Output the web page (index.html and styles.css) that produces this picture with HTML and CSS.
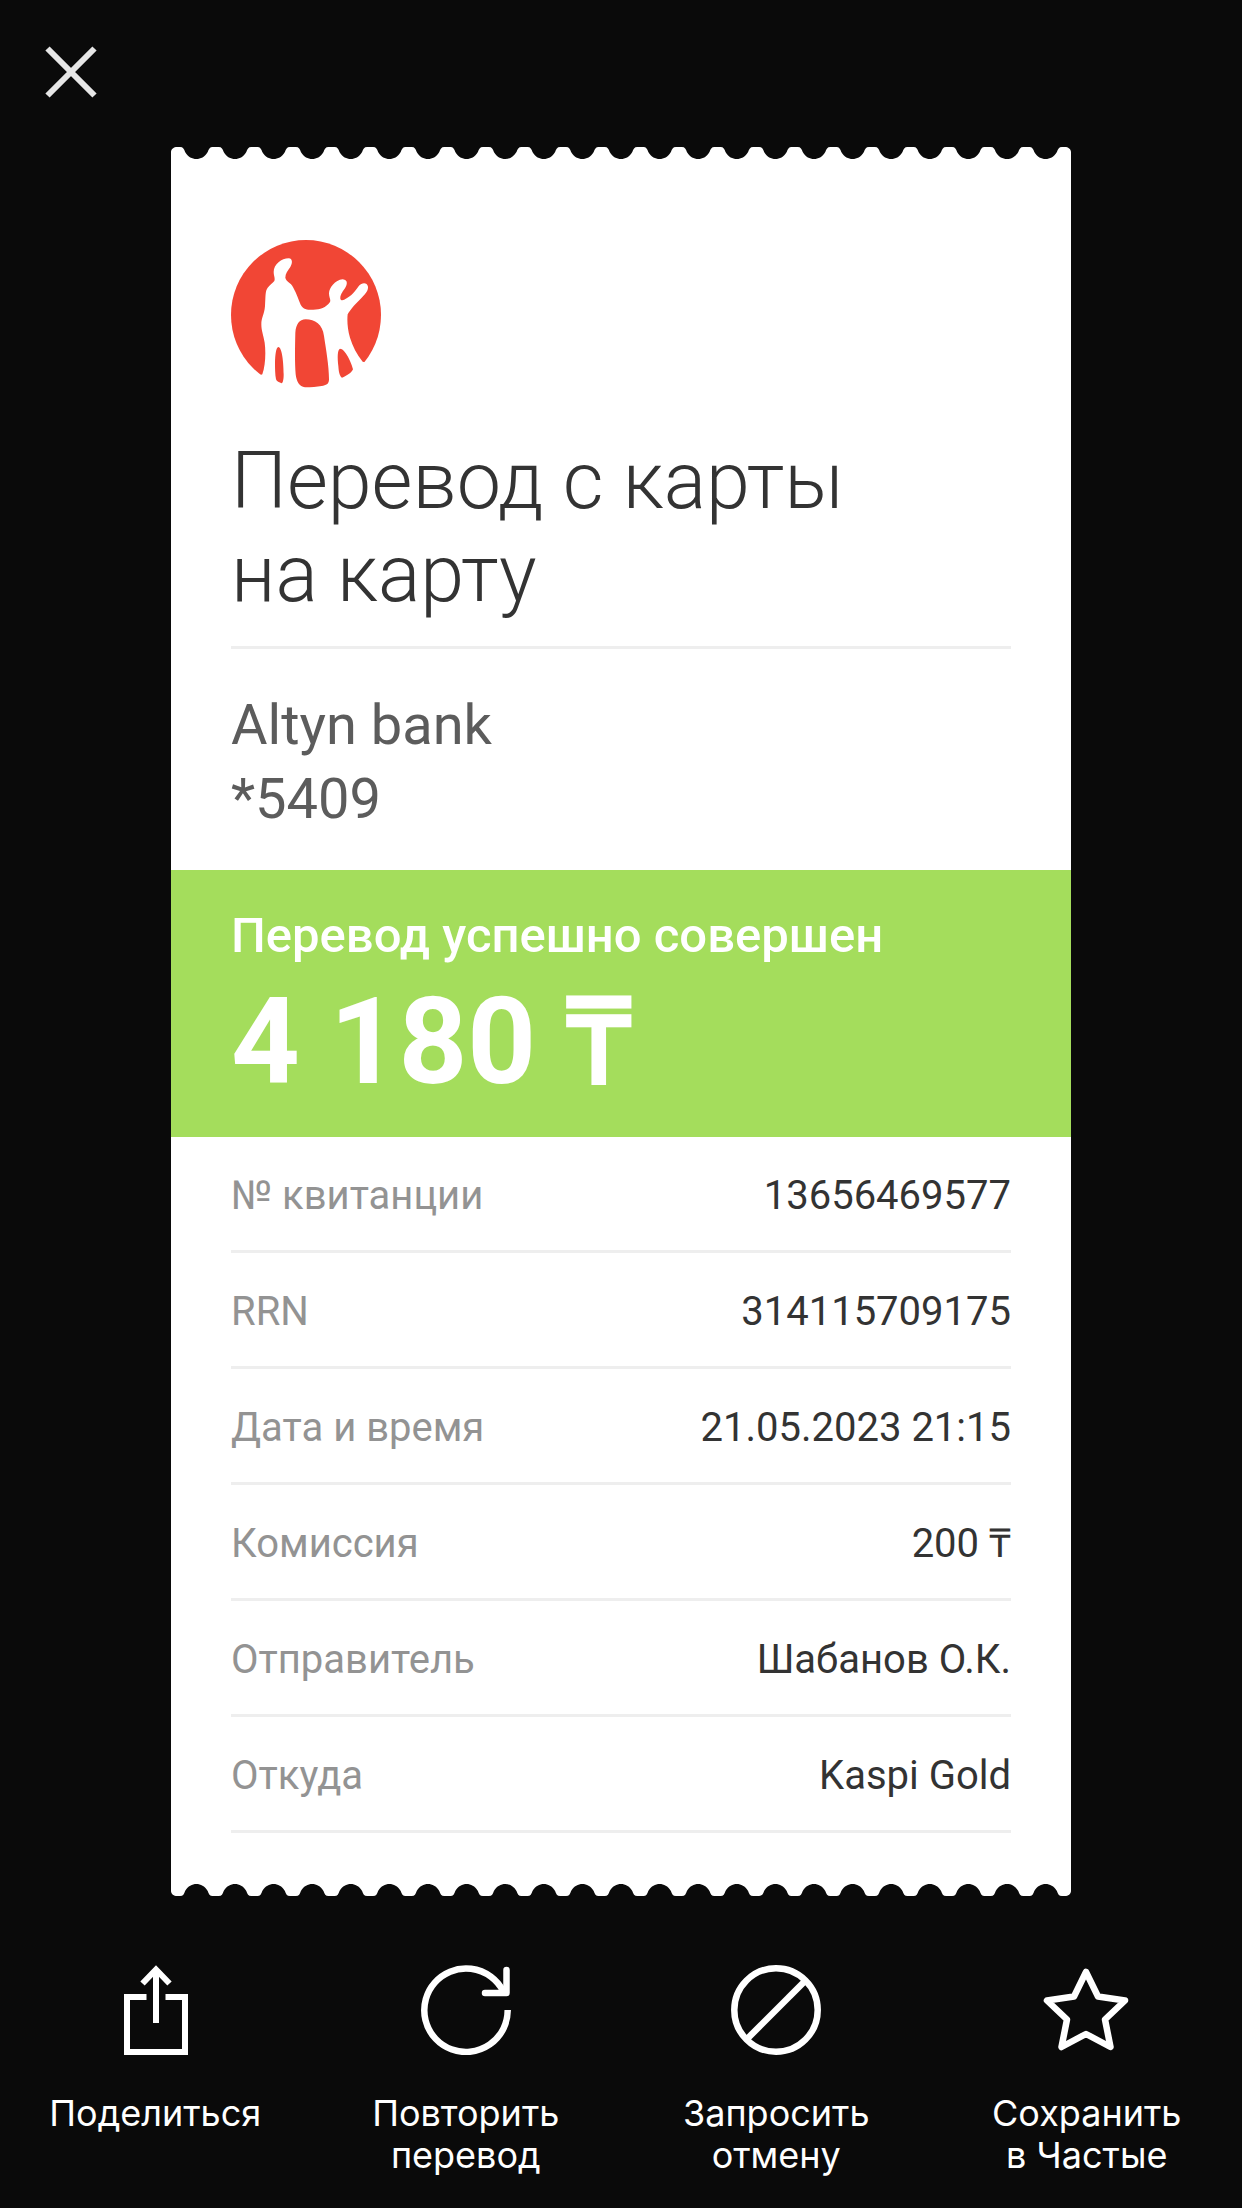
FILE: index.html
```html
<!DOCTYPE html>
<html lang="ru">
<head>
    <meta charset="UTF-8">
    <meta name="viewport" content="width=device-width, initial-scale=1.0">
    <title>Квитанция</title>
    <link rel="stylesheet" href="styles.css">
</head>
<body>
    <header>
        <button class="close-button" aria-label="Закрыть">
            <svg viewBox="0 0 52 52" width="52" height="52">
                <path d="M2.500 2.500L49.500 49.500M49.500 2.500L2.500 49.500"/>
            </svg>
        </button>
    </header>

    <main class="receipt">
        <svg class="edge" viewBox="0 0 900 12" preserveAspectRatio="none" aria-hidden="true">
            <path id="scallops" d="M0 12V5C0 2 3 0 6 0h.1
                h3c3 0 4 2 5 5c3 5 7 7 11.300 7s8.300-2 11.300-7c1-3 2-5 5-5h3
                h3c3 0 4 2 5 5c3 5 7 7 11.300 7s8.300-2 11.300-7c1-3 2-5 5-5h3
                h3c3 0 4 2 5 5c3 5 7 7 11.300 7s8.300-2 11.300-7c1-3 2-5 5-5h3
                h3c3 0 4 2 5 5c3 5 7 7 11.300 7s8.300-2 11.300-7c1-3 2-5 5-5h3
                h3c3 0 4 2 5 5c3 5 7 7 11.300 7s8.300-2 11.300-7c1-3 2-5 5-5h3
                h3c3 0 4 2 5 5c3 5 7 7 11.300 7s8.300-2 11.300-7c1-3 2-5 5-5h3
                h3c3 0 4 2 5 5c3 5 7 7 11.300 7s8.300-2 11.300-7c1-3 2-5 5-5h3
                h3c3 0 4 2 5 5c3 5 7 7 11.300 7s8.300-2 11.300-7c1-3 2-5 5-5h3
                h3c3 0 4 2 5 5c3 5 7 7 11.300 7s8.300-2 11.300-7c1-3 2-5 5-5h3
                h3c3 0 4 2 5 5c3 5 7 7 11.300 7s8.300-2 11.300-7c1-3 2-5 5-5h3
                h3c3 0 4 2 5 5c3 5 7 7 11.300 7s8.300-2 11.300-7c1-3 2-5 5-5h3
                h3c3 0 4 2 5 5c3 5 7 7 11.300 7s8.300-2 11.300-7c1-3 2-5 5-5h3
                h3c3 0 4 2 5 5c3 5 7 7 11.300 7s8.300-2 11.300-7c1-3 2-5 5-5h3
                h3c3 0 4 2 5 5c3 5 7 7 11.300 7s8.300-2 11.300-7c1-3 2-5 5-5h3
                h3c3 0 4 2 5 5c3 5 7 7 11.300 7s8.300-2 11.300-7c1-3 2-5 5-5h3
                h3c3 0 4 2 5 5c3 5 7 7 11.300 7s8.300-2 11.300-7c1-3 2-5 5-5h3
                h3c3 0 4 2 5 5c3 5 7 7 11.300 7s8.300-2 11.300-7c1-3 2-5 5-5h3
                h3c3 0 4 2 5 5c3 5 7 7 11.300 7s8.300-2 11.300-7c1-3 2-5 5-5h3
                h3c3 0 4 2 5 5c3 5 7 7 11.300 7s8.300-2 11.300-7c1-3 2-5 5-5h3
                h3c3 0 4 2 5 5c3 5 7 7 11.300 7s8.300-2 11.300-7c1-3 2-5 5-5h3
                h3c3 0 4 2 5 5c3 5 7 7 11.300 7s8.300-2 11.300-7c1-3 2-5 5-5h3
                h3c3 0 4 2 5 5c3 5 7 7 11.300 7s8.300-2 11.300-7c1-3 2-5 5-5h3
                h3c3 0 4 2 5 5c3 5 7 7 11.300 7s8.300-2 11.300-7c1-3 2-5 5-5h3
                C897 0 900 2 900 5V12Z"/>
        </svg>

        <div class="receipt-body">
            <section class="receipt-top">
                <svg class="logo" viewBox="63 62 450 450" role="img" aria-label="Kaspi">
                    <circle cx="288" cy="287" r="225" fill="#f14635"/>
                    <path fill="#fff" d="M157 465C166 440 168 400 164 370C160 345 154 335 154 315C154 295 163 285 165 260C167 235 165 215 173 205C180 196 188 192 193 185C196 175 191 170 191 158C191 135 215 117 236 117C248 118 248 130 241 143C233 155 226 163 226 175C228 187 242 188 250 205C260 222 266 242 272 256C280 272 295 271 310 271C330 271 348 265 360 248C363 240 357 235 357 222C358 205 375 182 398 180C412 181 413 192 407 203C400 215 390 225 391 238C393 245 400 244 410 237C430 225 440 208 447 199C455 189 472 188 474 202C475 215 465 225 455 235C440 250 422 268 413 285C411 300 412 330 420 355C428 380 440 405 458 427L513 440V512H130V478Z"/>
                    <g fill="#f14635">
                        <path d="M205 383C216 383 221 430 221 465C221 480 219 490 215 492C208 489 200 487 198 480C195 465 195 445 195 430C196 405 198 385 205 383Z"/>
                        <path d="M256 340C258 315 268 300 287 300C315 300 338 315 342 350C348 390 357 440 357 480C357 495 348 498 335 500C320 502 305 504 285 504C268 503 259 485 257 465C254 430 255 380 256 340Z"/>
                        <path d="M390 388C405 388 425 430 429 450C425 460 410 470 396 475C388 470 386 455 385 440C382 415 382 392 390 388Z"/>
                    </g>
                </svg>
                <h1>Перевод с карты<br>на карту</h1>
                <p class="recipient">Altyn bank<br>*5409</p>
            </section>

            <section class="status">
                <h2>Перевод успешно совершен</h2>
                <p class="amount">4 180 ₸</p>
            </section>

            <section class="details">
                <table>
                    <tr>
                        <th scope="row">№ квитанции</th>
                        <td>13656469577</td>
                    </tr>
                    <tr>
                        <th scope="row">RRN</th>
                        <td>314115709175</td>
                    </tr>
                    <tr>
                        <th scope="row">Дата и время</th>
                        <td>21.05.2023 21:15</td>
                    </tr>
                    <tr>
                        <th scope="row">Комиссия</th>
                        <td>200 ₸</td>
                    </tr>
                    <tr>
                        <th scope="row">Отправитель</th>
                        <td>Шабанов О.К.</td>
                    </tr>
                    <tr>
                        <th scope="row">Откуда</th>
                        <td>Kaspi Gold</td>
                    </tr>
                </table>
            </section>
        </div>

        <svg class="edge edge-bottom" viewBox="0 0 900 12" preserveAspectRatio="none" aria-hidden="true">
            <use href="#scallops"/>
        </svg>
    </main>

    <nav class="actions">
        <button>
            <svg viewBox="0 0 90 90" stroke-width="6">
                <path d="M36.500 32H17V87H75V32H55.500"/>
                <path d="M46 5V58"/>
                <path d="M32.500 18.500L46 4.500L59.500 18.500"/>
            </svg>
            <span>Поделиться</span>
        </button>
        <button>
            <svg viewBox="0 0 90 90" stroke-width="6.500" stroke-linejoin="round">
                <path d="M86.700 45A41.700 41.700 0 1 1 82 26"/>
                <path d="M85.500 5V28H64" stroke-linecap="round"/>
            </svg>
            <span>Повторить<br>перевод</span>
        </button>
        <button>
            <svg viewBox="0 0 90 90" stroke-width="6.500">
                <circle cx="45" cy="45" r="41.700"/>
                <path d="M16 74L74 16"/>
            </svg>
            <span>Запросить<br>отмену</span>
        </button>
        <button>
            <svg viewBox="0 0 90 90" stroke-width="6.500" stroke-linejoin="round">
                <path d="M44 7L56 31.500L83 35.500L63 54.500L68.500 82L44 69L19.500 82L25 54.500L5 35.500L32 31.500Z"/>
            </svg>
            <span>Сохранить<br>в Частые</span>
        </button>
    </nav>
</body>
</html>
```
FILE: styles.css
```css
* {
    box-sizing: border-box;
}
body {
    margin: 0;
    background-color: #0a0a0a;
    color: #333;
    font-family: Roboto, Arial, sans-serif;
}
h1, h2, p {
    margin: 0;
}
button {
    padding: 0;
    border: none;
    background: none;
    color: white;
    cursor: pointer;
}
svg {
    display: block;
}
header {
    display: flex;
    padding: 46px 45px 49px;
}
.close-button svg {
    fill: none;
    stroke: #e6e6e6;
    stroke-width: 6;
}
.receipt {
    max-width: 900px;
    margin: 0 auto;
}
.edge {
    width: 100%;
    height: 12px;
    fill: white;
}
.edge-bottom {
    transform: rotate(180deg);
}
.receipt-body {
    background-color: white;
    padding-bottom: 51px;
}
.receipt-top {
    padding: 81px 60px 34px;
}
.logo {
    width: 150px;
    height: 150px;
}
h1 {
    margin-top: 45px;
    padding-bottom: 25px;
    border-bottom: 3px solid #eee;
    font-size: 79px;
    font-weight: 300;
    line-height: 93px;
}
.recipient {
    margin-top: 39px;
    color: #5c5c5c;
    font-size: 56px;
    line-height: 74px;
}
.status {
    padding: 42px 60px 45px;
    background-color: #a4dd5c;
    color: white;
}
.status h2 {
    font-size: 49px;
    font-weight: 500;
    line-height: 48px;
}
.amount {
    margin-top: 32px;
    font-size: 120px;
    font-weight: 700;
    line-height: 100px;
}
.details {
    padding: 0 60px;
}
.details table {
    width: 100%;
    border-spacing: 0;
}
.details th, .details td {
    padding: 36px 0 31px;
    border-bottom: 3px solid #eee;
    font-size: 40px;
    font-weight: 400;
    line-height: 46px;
}
.details th {
    color: #939393;
    text-align: left;
}
.details td {
    text-align: right;
}
.actions {
    display: grid;
    grid-template-columns: repeat(4, 1fr);
    margin-top: 69px;
    padding-bottom: 32px;
}
.actions button {
    display: flex;
    flex-direction: column;
    align-items: center;
    gap: 37px;
    font-family: Inter, Roboto, sans-serif;
    font-size: 36px;
    line-height: 42px;
}
.actions svg {
    width: 90px;
    height: 90px;
    fill: none;
    stroke: white;
}
```
